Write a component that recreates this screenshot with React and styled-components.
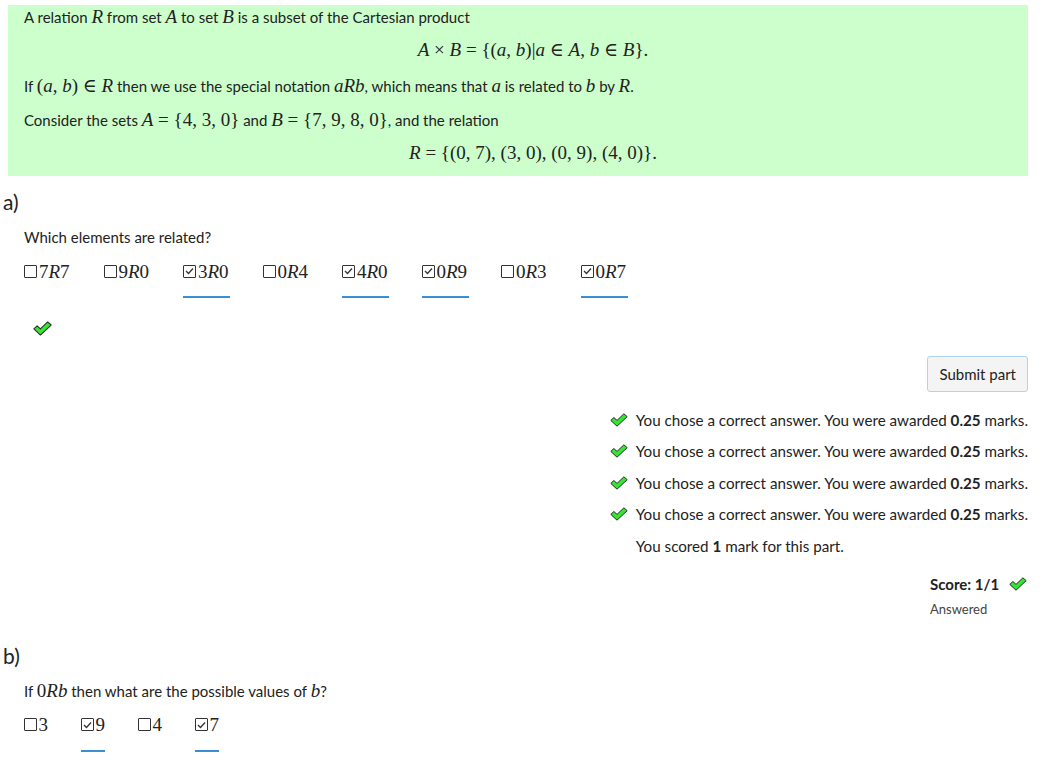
import React from "react";
import styled, { createGlobalStyle } from "styled-components";

const Global = createGlobalStyle`
  html, body { margin: 0; padding: 0; background: #fff; }
  body {
    font-family: "Source Sans Pro", Lato, "Liberation Sans", sans-serif;
    font-size: 15px;
    color: #222;
  }
`;

const Page = styled.div`
  padding: 5px 25px 20px 8px;
  width: 1020px;
`;

const Statement = styled.div`
  background: #ccffcc;
  padding: 0 16px 11px 16px;
`;

const Para = styled.p`
  margin: 0;
  line-height: 24px;
  padding: ${(p) => p.$pad || "0"};
`;

const Display = styled.div`
  text-align: center;
  line-height: 24px;
  padding: ${(p) => p.$pad || "0"};
  padding-left: 30px;
`;

const Mx = styled.span`
  font-family: "Liberation Serif", "DejaVu Serif", serif;
  font-size: 19px;
  line-height: 1;
  white-space: nowrap;
`;

const V = styled.i`
  font-style: italic;
`;

const PartLabel = styled.h3`
  margin: ${(p) => p.$m || "0"};
  margin-left: -5px;
  font-weight: 400;
  font-size: 21px;
  line-height: 28px;
  color: #222;
`;

const PartBody = styled.div`
  padding-left: 16px;
`;

const Prompt = styled.p`
  margin: 0;
  line-height: 24px;
  padding: 9px 0 0 0;
`;

const ChoiceRow = styled.div`
  display: flex;
  gap: ${(p) => p.$gap || "26px"};
  margin-top: 11px;
`;

const Choice = styled.label`
  display: flex;
  flex-direction: column;
  width: ${(p) => p.$w || "47px"};
`;

const ChoiceInner = styled.span`
  display: flex;
  align-items: center;
  gap: 1px;
  height: 22px;
`;

const Box = styled.span`
  width: 11px;
  height: 11px;
  border: 1.5px solid #333;
  border-radius: 1px;
  display: inline-flex;
  align-items: center;
  justify-content: center;
  box-sizing: content-box;
  margin-right: 1px;
`;

const Underline = styled.span`
  margin-top: 14px;
  height: 2px;
  width: 100%;
  background: ${(p) => (p.$on ? "#3b8fd6" : "transparent")};
`;

const TickWrap = styled.div`
  margin: 23px 0 0 9px;
  height: 16px;
`;

const Actions = styled.div`
  display: flex;
  justify-content: flex-end;
  margin-top: 19px;
`;

const SubmitButton = styled.button`
  font-family: inherit;
  font-size: 15px;
  color: #222;
  background: #f4f4f4;
  border: 1px solid #aed4ee;
  border-radius: 3px;
  padding: 0 11px;
  height: 36px;
  cursor: pointer;
`;

const FeedbackList = styled.ul`
  list-style: none;
  margin: 12px 0 0 0;
  padding: 0;
  display: flex;
  flex-direction: column;
  font-size: 15.2px;
`;

const FeedbackItem = styled.li`
  display: flex;
  align-items: center;
  height: 31.5px;
  padding-left: ${(p) => (p.$plain ? "26px" : "0")};
`;

const IconCell = styled.span`
  width: 26px;
  display: inline-flex;
  align-items: center;
`;

const RightCol = styled.div`
  display: flex;
  flex-direction: column;
  align-items: flex-end;
`;

const ScoreBlock = styled.div`
  margin-top: 10px;
  display: flex;
  flex-direction: column;
  align-items: flex-start;
  width: 98px;
`;

const ScoreLine = styled.div`
  display: flex;
  align-items: center;
  gap: 10px;
  font-weight: 700;
  line-height: 24px;
`;

const Answered = styled.div`
  font-size: 13px;
  color: #444;
  line-height: 24px;
  margin-top: 1px;
`;

const Tick = ({ w = 19 }) => (
  <svg width={w} height={Math.round((w * 14) / 18)} viewBox="0 0 18 14">
    <path
      d="M0.8 7.4 L3.9 4.5 L7 7.4 L13.9 0.8 L17.2 3.7 L7 13.2 Z"
      fill="#33e633"
      stroke="#2b2b2b"
      strokeWidth="1"
      strokeLinejoin="round"
    />
  </svg>
);

const CheckMark = () => (
  <svg width="9" height="8" viewBox="0 0 9 8">
    <path d="M1 4 L3.5 6.5 L8 1.5" fill="none" stroke="#333" strokeWidth="1.3" />
  </svg>
);

const Option = ({ checked, children, w }) => (
  <Choice $w={w}>
    <ChoiceInner>
      <Box>{checked && <CheckMark />}</Box>
      <Mx>{children}</Mx>
    </ChoiceInner>
    <Underline $on={checked} />
  </Choice>
);

const rel = (a, b) => (
  <>
    {a}
    <V>R</V>
    {b}
  </>
);

const optionsA = [
  ["7", "7", false],
  ["9", "0", false],
  ["3", "0", true],
  ["0", "4", false],
  ["4", "0", true],
  ["0", "9", true],
  ["0", "3", false],
  ["0", "7", true],
];

const optionsB = [
  ["3", false],
  ["9", true],
  ["4", false],
  ["7", true],
];

const msg = "You chose a correct answer. You were awarded ";

export default function App() {
  return (
    <Page>
      <Global />
      <Statement>
        <Para>
          A relation <Mx><V>R</V></Mx> from set <Mx><V>A</V></Mx> to set{" "}
          <Mx><V>B</V></Mx> is a subset of the Cartesian product
        </Para>
        <Display $pad="9px 0 0 0">
          <Mx>
            <V>A</V> × <V>B</V> = {"{"}(<V>a</V>, <V>b</V>)|<V>a</V> ∈ <V>A</V>, <V>b</V> ∈ <V>B</V>{"}"}.
          </Mx>
        </Display>
        <Para $pad="12px 0 0 0">
          If <Mx>(<V>a</V>, <V>b</V>) ∈ <V>R</V></Mx> then we use the special notation{" "}
          <Mx><V>aRb</V></Mx>, which means that <Mx><V>a</V></Mx> is related to{" "}
          <Mx><V>b</V></Mx> by <Mx><V>R</V></Mx>.
        </Para>
        <Para $pad="10px 0 0 0">
          Consider the sets <Mx><V>A</V> = {"{"}4, 3, 0{"}"}</Mx> and{" "}
          <Mx><V>B</V> = {"{"}7, 9, 8, 0{"}"}</Mx>, and the relation
        </Para>
        <Display $pad="9px 0 0 0">
          <Mx>
            <V>R</V> = {"{"}(0, 7), (3, 0), (0, 9), (4, 0){"}"}.
          </Mx>
        </Display>
      </Statement>

      <PartLabel $m="12px 0 0 0">a)</PartLabel>
      <PartBody>
        <Prompt>Which elements are related?</Prompt>
        <ChoiceRow $gap="32.5px">
          {optionsA.map(([a, b, c], i) => (
            <Option key={i} checked={c} w="47px">
              {rel(a, b)}
            </Option>
          ))}
        </ChoiceRow>
        <TickWrap>
          <Tick w={19} />
        </TickWrap>
        <RightCol>
          <Actions>
            <SubmitButton>Submit part</SubmitButton>
          </Actions>
          <FeedbackList>
            {[0, 1, 2, 3].map((i) => (
              <FeedbackItem key={i}>
                <IconCell>
                  <Tick w={18} />
                </IconCell>
                <span>
                  {msg}
                  <b>0.25</b> marks.
                </span>
              </FeedbackItem>
            ))}
            <FeedbackItem $plain>
              <span>
                You scored <b>1</b> mark for this part.
              </span>
            </FeedbackItem>
          </FeedbackList>
          <ScoreBlock>
            <ScoreLine>
              Score: 1/1 <Tick w={18} />
            </ScoreLine>
            <Answered>Answered</Answered>
          </ScoreBlock>
        </RightCol>
      </PartBody>

      <PartLabel $m="21px 0 0 0">b)</PartLabel>
      <PartBody>
        <Prompt>
          If <Mx>0<V>Rb</V></Mx> then what are the possible values of{" "}
          <Mx><V>b</V></Mx>?
        </Prompt>
        <ChoiceRow $gap="33px">
          {optionsB.map(([v, c], i) => (
            <Option key={i} checked={c} w="24px">
              {v}
            </Option>
          ))}
        </ChoiceRow>
      </PartBody>
    </Page>
  );
}
